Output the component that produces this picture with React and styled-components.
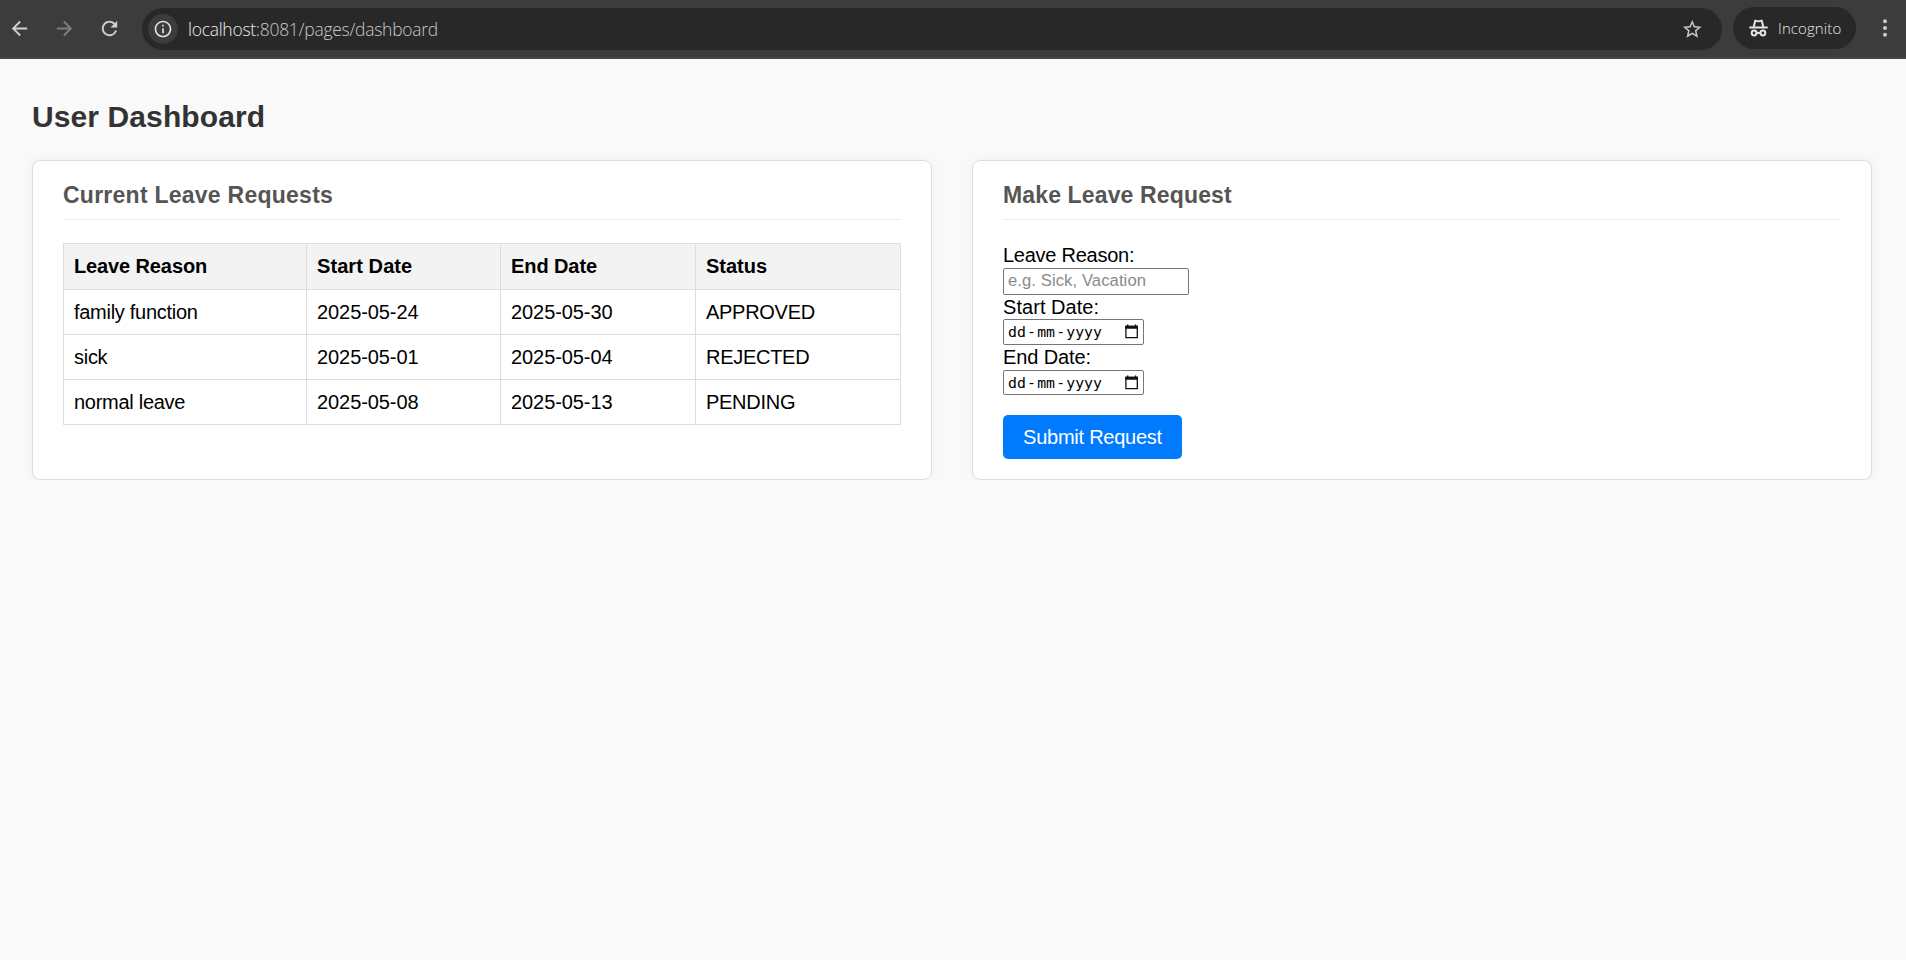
import React from "react";
import styled, { createGlobalStyle } from "styled-components";
import { MdArrowBack, MdArrowForward, MdRefresh, MdInfoOutline, MdStarBorder } from "react-icons/md";

const GlobalStyle = createGlobalStyle`
  * { box-sizing: border-box; }
  body {
    margin: 0;
    background: #f9f9f9;
    color: #000;
    font-family: "Liberation Sans", Arial, sans-serif;
    font-size: 20px;
  }
`;

const Toolbar = styled.header`
  display: flex;
  align-items: center;
  height: 59px;
  padding: 0 11px 2px 8px;
  background: #3c3c3c;
  border-bottom: 2px solid #454545;
  color: #c7c7c7;
`;

const NavButtons = styled.nav`
  display: flex;
  gap: 22px;
  width: 134px;
  padding-top: 1px;
  flex: none;
`;

const NavButton = styled.span`
  display: flex;
  width: 23px;
  height: 23px;
  font-size: 23px;
  color: ${(p) => (p.$disabled ? "#7d7d7d" : "#d0d0d0")};
`;

const AddressBar = styled.div`
  display: flex;
  align-items: center;
  flex: 1;
  height: 42px;
  margin-top: 3px;
  padding: 0 19px 0 6px;
  border-radius: 21px;
  background: #282828;
`;

const SiteInfo = styled.span`
  display: flex;
  align-items: center;
  justify-content: center;
  width: 30px;
  height: 30px;
  border-radius: 50%;
  background: #3c3c3c;
  color: #e0e0e0;
  font-size: 20px;
`;

const Url = styled.span`
  flex: 1;
  margin-left: 10px;
  color: #c9c9c9;
  font: 300 17.5px/24px "Open Sans", "Noto Sans", sans-serif;
  letter-spacing: -0.28px;
`;

const UrlHost = styled.span`
  color: #efefef;
`;

const Bookmark = styled.span`
  display: flex;
  padding-top: 1px;
  font-size: 22.5px;
`;

const IncognitoChip = styled.div`
  display: flex;
  align-items: center;
  gap: 10px;
  width: 123px;
  height: 42px;
  margin: 1px 0 0 11px;
  padding-left: 16px;
  border-radius: 21px;
  background: #282828;
  color: #e6e6e6;
  font: 300 15px/20px "Open Sans", "Noto Sans", sans-serif;
  letter-spacing: 0.1px;
`;

const MenuIcon = styled.svg`
  width: 20px;
  height: 20px;
  margin-left: 19px;
  fill: #c9c9c9;
`;

const Page = styled.main`
  padding: 40px 34px 0 32px;
`;

const PageTitle = styled.h1`
  margin: 0 0 25px;
  color: #333;
  font-size: 30px;
  line-height: 36px;
  letter-spacing: 0.1px;
`;

const Cards = styled.div`
  display: grid;
  grid-template-columns: 900px 900px;
  gap: 40px;
`;

const Card = styled.section`
  height: 320px;
  padding: 19px 30px;
  border: 1px solid #ddd;
  border-radius: 8px;
  background: #fff;
  box-shadow: 0 0 10px rgba(0, 0, 0, 0.05);
`;

const CardTitle = styled.h2`
  height: 40px;
  margin: 0 0 23px;
  border-bottom: 1px solid #eee;
  color: #555;
  font-size: 23px;
  line-height: 31px;
  letter-spacing: ${(p) => p.$tracking}px;
`;

const Table = styled.table`
  width: 838px;
  border-collapse: collapse;
  table-layout: fixed;
`;

const Column = styled.col`
  width: ${(p) => p.$width}px;
`;

const HeadCell = styled.th`
  height: 46px;
  padding: 0 10px;
  border: 1px solid #ddd;
  background: #f3f3f3;
  text-align: left;
  line-height: 23px;
  letter-spacing: ${(p) => p.$tracking || 0}px;
`;

const Cell = styled.td`
  height: 45px;
  padding: 0 10px;
  border: 1px solid #ddd;
  line-height: 23px;
  letter-spacing: ${(p) => (p.$date ? -0.08 : -0.28)}px;
`;

const Form = styled.form`
  display: flex;
  flex-direction: column;
  align-items: flex-start;
`;

const Label = styled.label`
  height: ${(p) => p.$height}px;
  line-height: 24px;
  letter-spacing: ${(p) => p.$tracking || 0}px;
`;

const TextInput = styled.input`
  width: 186px;
  height: 27px;
  padding: 0 4px 2px;
  border: 1px solid #767676;
  border-radius: 2px;
  background: #fff;
  font: 16.67px/20px "Liberation Sans", Arial, sans-serif;
  letter-spacing: 0.07px;
  &::placeholder { color: #8a8a8a; }
`;

const DateInput = styled.div`
  display: flex;
  align-items: center;
  justify-content: space-between;
  width: 141px;
  height: ${(p) => p.$height}px;
  padding: 0 4px;
  border: 1px solid #767676;
  border-radius: 2px;
  background: #fff;
`;

const DateParts = styled.span`
  display: flex;
  gap: 1.2px;
  font: 14.8px/20px "DejaVu Sans Mono", monospace;
`;

const CalendarIcon = styled.svg`
  width: 15px;
  height: 16px;
`;

const SubmitButton = styled.button`
  width: 179px;
  height: 44px;
  margin-top: 20px;
  padding: 0;
  border: 0;
  border-radius: 5px;
  background: #007bff;
  color: #fff;
  font: 20px/24px "Liberation Sans", Arial, sans-serif;
  letter-spacing: -0.25px;
`;

const requests = [
  ["family function", "2025-05-24", "2025-05-30", "APPROVED"],
  ["sick", "2025-05-01", "2025-05-04", "REJECTED"],
  ["normal leave", "2025-05-08", "2025-05-13", "PENDING"],
];

function IncognitoIcon() {
  return (
    <svg width="19" height="18" viewBox="0 0 19 18" fill="none" stroke="currentColor" strokeWidth="2">
      <path d="M4.7 8 6.3 1.6 9.5 2.4l3.2-.8L14.3 8" strokeLinejoin="round" />
      <path d="M.3 8.5h18.4" />
      <circle cx="5.1" cy="14" r="2.4" />
      <circle cx="13.9" cy="14" r="2.4" />
      <path d="M7.5 13.9h4" />
    </svg>
  );
}

function DateField({ height }) {
  return (
    <DateInput $height={height}>
      <DateParts>
        <span>dd</span>
        <span>-</span>
        <span>mm</span>
        <span>-</span>
        <span>yyyy</span>
      </DateParts>
      <CalendarIcon viewBox="0 0 15 16">
        <path d="M1.9 2.5h11.4v11.2H1.9z" fill="none" stroke="#111" strokeWidth="1.3" />
        <path d="M1.2 1.8h12.8v3H1.2zM3 .6h1.4V3H3zM10.8.6h1.4V3h-1.4z" fill="#111" />
      </CalendarIcon>
    </DateInput>
  );
}

export default function App() {
  return (
    <>
      <GlobalStyle />
      <Toolbar>
        <NavButtons>
          <NavButton><MdArrowBack /></NavButton>
          <NavButton $disabled><MdArrowForward /></NavButton>
          <NavButton><MdRefresh /></NavButton>
        </NavButtons>
        <AddressBar>
          <SiteInfo><MdInfoOutline /></SiteInfo>
          <Url><UrlHost>localhost</UrlHost>:8081/pages/dashboard</Url>
          <Bookmark><MdStarBorder /></Bookmark>
        </AddressBar>
        <IncognitoChip>
          <IncognitoIcon />
          Incognito
        </IncognitoChip>
        <MenuIcon viewBox="0 0 20 20">
          <circle cx="10" cy="3.3" r="2" />
          <circle cx="10" cy="10" r="2" />
          <circle cx="10" cy="16.7" r="2" />
        </MenuIcon>
      </Toolbar>
      <Page>
        <PageTitle>User Dashboard</PageTitle>
        <Cards>
          <Card>
            <CardTitle $tracking={0.25}>Current Leave Requests</CardTitle>
            <Table>
              <colgroup>
                <Column $width={243} />
                <Column $width={194} />
                <Column $width={195} />
                <Column $width={205} />
              </colgroup>
              <thead>
                <tr>
                  <HeadCell $tracking={-0.12}>Leave Reason</HeadCell>
                  <HeadCell $tracking={0.08}>Start Date</HeadCell>
                  <HeadCell $tracking={-0.08}>End Date</HeadCell>
                  <HeadCell>Status</HeadCell>
                </tr>
              </thead>
              <tbody>
                {requests.map((row) => (
                  <tr key={row[0]}>
                    {row.map((value, i) => <Cell key={value} $date={i === 1 || i === 2}>{value}</Cell>)}
                  </tr>
                ))}
              </tbody>
            </Table>
          </Card>
          <Card>
            <CardTitle $tracking={0.14}>Make Leave Request</CardTitle>
            <Form>
              <Label $height={25} $tracking={-0.25}>Leave Reason:</Label>
              <TextInput placeholder="e.g. Sick, Vacation" />
              <Label $height={24} $tracking={0.05}>Start Date:</Label>
              <DateField height={26} />
              <Label $height={25} $tracking={-0.12}>End Date:</Label>
              <DateField height={25} />
              <SubmitButton type="button">Submit Request</SubmitButton>
            </Form>
          </Card>
        </Cards>
      </Page>
    </>
  );
}
